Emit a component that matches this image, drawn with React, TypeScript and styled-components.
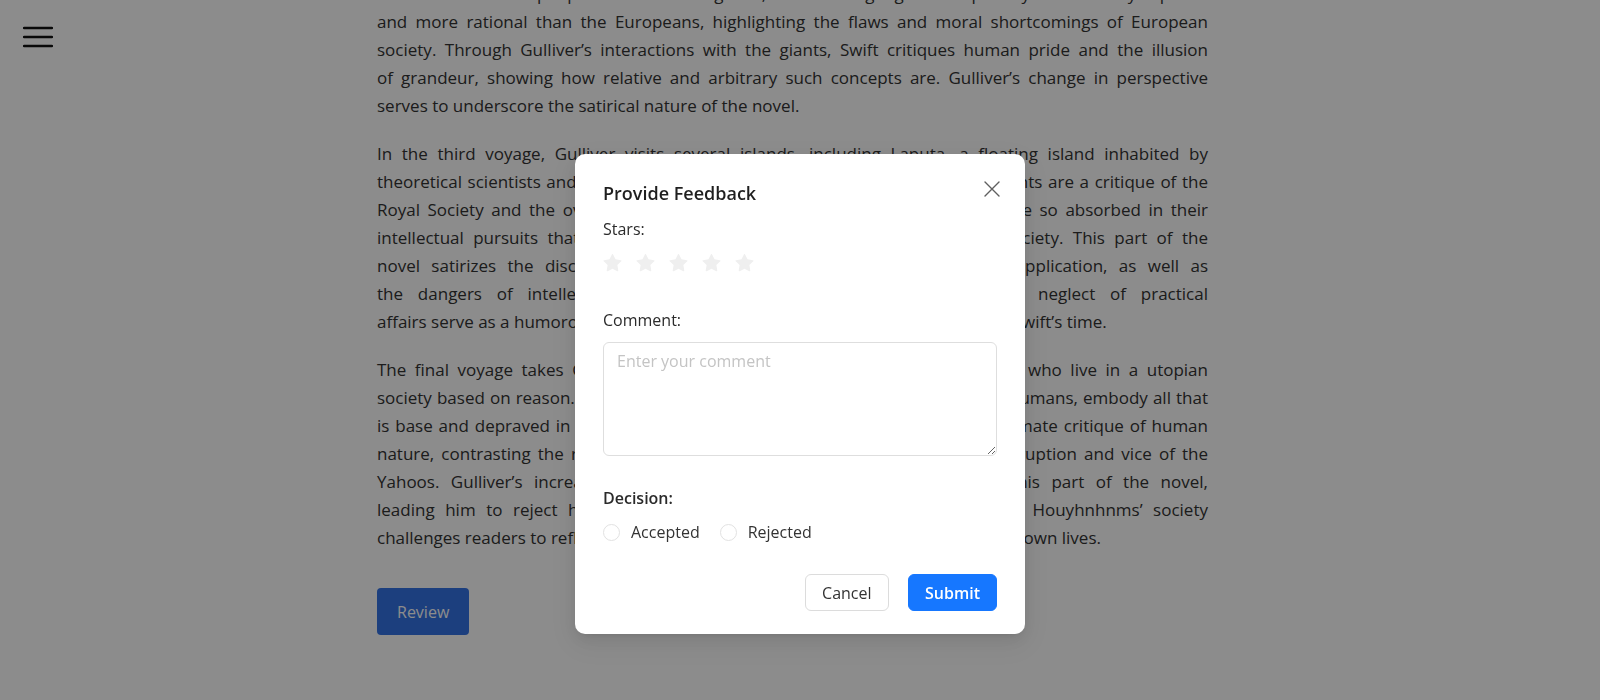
import React, { useLayoutEffect, useRef } from "react";
import styled, { createGlobalStyle } from "styled-components";

const GlobalStyle = createGlobalStyle`
  html, body {
    margin: 0;
    padding: 0;
    height: 100%;
    overflow: hidden;
    background: #ffffff;
  }
  body {
    font-family: "Open Sans", "Noto Sans", Arial, sans-serif;
    color: #333333;
  }
  * { box-sizing: border-box; }
`;

const Viewport = styled.div`
  position: relative;
  height: 100vh;
  overflow: hidden;
`;

const MenuButton = styled.button`
  position: fixed;
  top: 26px;
  left: 23px;
  padding: 0;
  border: 0;
  background: transparent;
  line-height: 0;
  cursor: pointer;
  color: #111111;
`;

const Main = styled.main`
  padding: 40px 392px 80px 377px;
`;

const Heading = styled.h1`
  margin: 0 0 24px;
  font-size: 32px;
  font-weight: 700;
  color: #222222;
`;

const Paragraph = styled.p`
  margin: 0 0 20px;
  font-size: 17px;
  line-height: 28px;
  color: #333333;
`;

const Line = styled.span<{ $last?: boolean }>`
  display: block;
  text-align: justify;
  text-align-last: ${(p) => (p.$last ? "left" : "justify")};
`;

const ReviewButton = styled.button`
  margin-top: 16px;
  height: 47px;
  padding: 0 20px;
  border: 0;
  border-radius: 4px;
  background: #3473e6;
  color: #ffffff;
  font-family: inherit;
  font-size: 16px;
  cursor: pointer;
`;

const Mask = styled.div`
  position: fixed;
  inset: 0;
  background: rgba(0, 0, 0, 0.45);
  display: flex;
  justify-content: center;
  align-items: flex-start;
  padding-top: 154px;
`;

const Modal = styled.div`
  position: relative;
  width: 450px;
  background: #ffffff;
  border-radius: 10px;
  padding: 26px 28px 23px;
  box-shadow: 0 6px 16px 0 rgba(0, 0, 0, 0.08),
    0 3px 6px -4px rgba(0, 0, 0, 0.12), 0 9px 28px 8px rgba(0, 0, 0, 0.05);
`;

const Title = styled.h2`
  margin: 0;
  font-size: 18px;
  line-height: 26px;
  font-weight: 600;
  color: rgba(0, 0, 0, 0.88);
`;

const CloseButton = styled.button`
  position: absolute;
  top: 26px;
  right: 24px;
  width: 18px;
  height: 18px;
  padding: 0;
  border: 0;
  background: transparent;
  color: #5f5f5f;
  line-height: 0;
  cursor: pointer;
`;

const Field = styled.div<{ $top: number }>`
  margin-top: ${(p) => p.$top}px;
  display: flex;
  flex-direction: column;
`;

const Label = styled.label<{ $weight?: number }>`
  font-size: 16px;
  line-height: 24px;
  font-weight: ${(p) => p.$weight ?? 500};
  color: #2b2b2b;
`;

const StarRow = styled.div`
  margin-top: 12px;
  display: flex;
  gap: 14px;
  height: 20px;
  align-items: center;
`;

const Star = styled.svg`
  width: 19px;
  height: 19px;
  fill: #efefef;
`;

const TextArea = styled.textarea`
  margin-top: 10px;
  width: 100%;
  height: 114px;
  padding: 6px 13px;
  border: 1px solid #dedede;
  border-radius: 6px;
  font-family: inherit;
  font-size: 16px;
  line-height: 24px;
  color: #333333;
  resize: vertical;
  outline: none;
  &::placeholder {
    color: #c4c4c4;
  }
`;

const RadioRow = styled.div`
  margin-top: 10px;
  display: flex;
  align-items: center;
  gap: 20px;
  height: 24px;
`;

const RadioOption = styled.label`
  display: inline-flex;
  align-items: center;
  gap: 11px;
  font-size: 16px;
  line-height: 24px;
  color: #333333;
  cursor: pointer;
`;

const RadioInput = styled.input`
  appearance: none;
  margin: 0;
  width: 17px;
  height: 17px;
  border: 1px solid #e2e2e2;
  border-radius: 50%;
  background: #ffffff;
`;

const Footer = styled.div`
  margin-top: 30px;
  display: flex;
  justify-content: flex-end;
  gap: 19px;
`;

const FooterButton = styled.button<{ $primary?: boolean }>`
  height: 37px;
  padding: 0 ${(p) => (p.$primary ? 16 : 16.5)}px;
  border-radius: 6px;
  border: 1px solid ${(p) => (p.$primary ? "#1677ff" : "#dcdcdc")};
  background: ${(p) => (p.$primary ? "#1677ff" : "#ffffff")};
  color: ${(p) => (p.$primary ? "#ffffff" : "#333333")};
  font-family: inherit;
  font-size: 16px;
  font-weight: ${(p) => (p.$primary ? 600 : 400)};
  cursor: pointer;
`;

const intro = [
  "Jonathan Swift’s Gulliver’s Travels is a satirical work that follows the journeys of Lemuel Gulliver,",
  "a ship’s surgeon, through a series of fantastical lands. In the first voyage, Gulliver is shipwrecked on",
  "the island of Lilliput, where the inhabitants are only six inches tall. The petty disputes and political",
  "intrigues of the Lilliputians mirror the absurdities of English politics and the court of Swift’s day.",
];

const second = [
  "In the second voyage, Gulliver travels to Brobdingnag, where he finds himself a tiny curiosity among",
  "a race of enormous people. In this land of giants, the Brobdingnagians are portrayed as morally superior",
  "and more rational than the Europeans, highlighting the flaws and moral shortcomings of European",
  "society. Through Gulliver’s interactions with the giants, Swift critiques human pride and the illusion",
  "of grandeur, showing how relative and arbitrary such concepts are. Gulliver’s change in perspective",
  "serves to underscore the satirical nature of the novel.",
];

const third = [
  "In the third voyage, Gulliver visits several islands, including Laputa, a floating island inhabited by",
  "theoretical scientists and philosophers, whose absurd and impractical experiments are a critique of the",
  "Royal Society and the overly abstract thinking of its many members, who were so absorbed in their",
  "intellectual pursuits that they neglected the practical needs of their own society. This part of the",
  "novel satirizes the disconnect between scientific theory and its practical application, as well as",
  "the dangers of intellectual arrogance. Their absurd inventions and the neglect of practical",
  "affairs serve as a humorous commentary on the total scientific establishment of Swift’s time.",
];

const fourth = [
  "The final voyage takes Gulliver to the lands of Houyhnhnms, rational horses who live in a utopian",
  "society based on reason. In contrast, the Yahoos, brutish creatures resembling humans, embody all that",
  "is base and depraved in human nature. This stark contrast serves as Swift’s ultimate critique of human",
  "nature, contrasting the rationality and virtue of the Houyhnhnms with the corruption and vice of the",
  "Yahoos. Gulliver’s increasing disillusionment with humanity is evident in this part of the novel,",
  "leading him to reject humankind altogether. The idealized portrayal of the Houyhnhnms’ society",
  "challenges readers to reflect on the nature of humanity and the flaws within their own lives.",
];

const STAR_PATH =
  "M908.1 353.1l-253.9-36.9L540.7 86.1c-3.1-6.3-8.2-11.4-14.5-14.5-15.8-7.8-35-1.3-42.9 14.5L369.8 316.2l-253.9 36.9c-7 1-13.4 4.3-18.3 9.3a32.05 32.05 0 00.6 45.3l183.7 179.1-43.4 252.9a31.95 31.95 0 0046.4 33.7L512 754l227.1 119.4c6.2 3.3 13.4 4.4 20.3 3.2 17.4-3 29.1-19.5 26.1-36.9l-43.4-252.9 183.7-179.1c5-4.9 8.3-11.3 9.3-18.3 2.7-17.5-9.5-33.7-27-36.3z";

function TextBlock({
  lines,
  anchorIndex,
  anchorRef,
}: {
  lines: string[];
  anchorIndex?: number;
  anchorRef?: React.RefObject<HTMLSpanElement | null>;
}) {
  return (
    <Paragraph>
      {lines.map((l, i) => (
        <Line
          key={i}
          $last={i === lines.length - 1}
          ref={i === anchorIndex ? anchorRef : undefined}
        >
          {l}
        </Line>
      ))}
    </Paragraph>
  );
}

export default function App() {
  const viewRef = useRef<HTMLDivElement>(null);
  const anchorRef = useRef<HTMLSpanElement>(null);

  useLayoutEffect(() => {
    const v = viewRef.current;
    const a = anchorRef.current;
    if (v && a) {
      v.scrollTop = a.offsetTop - 8;
    }
  }, []);

  return (
    <>
      <GlobalStyle />
      <Viewport ref={viewRef}>
        <Main>
          <Heading>Gulliver’s Travels</Heading>
          <TextBlock lines={intro} />
          <TextBlock lines={second} anchorIndex={2} anchorRef={anchorRef} />
          <TextBlock lines={third} />
          <TextBlock lines={fourth} />
          <ReviewButton>Review</ReviewButton>
        </Main>
        <MenuButton aria-label="Open menu">
          <svg width="30" height="22" viewBox="0 0 30 22" fill="none">
            <path
              d="M1 2h28M1 11h28M1 20h28"
              stroke="currentColor"
              strokeWidth="2.4"
              strokeLinecap="round"
            />
          </svg>
        </MenuButton>
      </Viewport>
      <Mask>
        <Modal role="dialog" aria-label="Provide Feedback">
          <Title>Provide Feedback</Title>
          <CloseButton aria-label="Close">
            <svg width="18" height="18" viewBox="0 0 18 18" fill="none">
              <path
                d="M2 2l14 14M16 2L2 16"
                stroke="currentColor"
                strokeWidth="1.4"
                strokeLinecap="round"
              />
            </svg>
          </CloseButton>
          <Field $top={11}>
            <Label>Stars:</Label>
            <StarRow>
              {[0, 1, 2, 3, 4].map((i) => (
                <Star key={i} viewBox="64 64 896 896">
                  <path d={STAR_PATH} />
                </Star>
              ))}
            </StarRow>
          </Field>
          <Field $top={35}>
            <Label>Comment:</Label>
            <TextArea placeholder="Enter your comment" />
          </Field>
          <Field $top={30}>
            <Label $weight={600}>Decision:</Label>
            <RadioRow>
              <RadioOption>
                <RadioInput type="radio" name="decision" />
                Accepted
              </RadioOption>
              <RadioOption>
                <RadioInput type="radio" name="decision" />
                Rejected
              </RadioOption>
            </RadioRow>
          </Field>
          <Footer>
            <FooterButton>Cancel</FooterButton>
            <FooterButton $primary>Submit</FooterButton>
          </Footer>
        </Modal>
      </Mask>
    </>
  );
}
